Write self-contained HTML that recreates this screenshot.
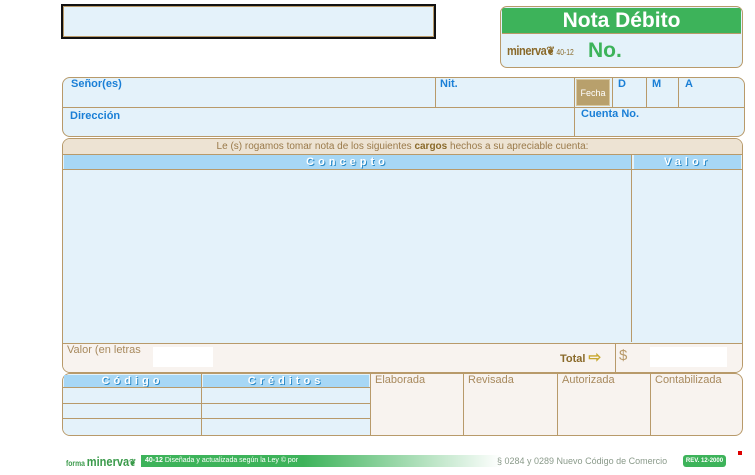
<!DOCTYPE html>
<html><head><meta charset="utf-8"><style>
*{margin:0;padding:0;box-sizing:border-box}
body{width:755px;height:475px;background:#fff;position:relative;overflow:hidden;font-family:"Liberation Sans",sans-serif}
.a{position:absolute}
.lb{color:#1a7fd6;font-weight:bold;font-size:11px}
.vl{position:absolute;width:1px;background:#b89a6a}
.hl{position:absolute;height:1px;background:#b89a6a}
.bar{position:absolute;background:#a7d7f5;color:#fff;font-weight:bold;font-size:11px;letter-spacing:4px;text-align:center;line-height:14px;text-shadow:1px 1px 0 #2a8ac8}
.sig{position:absolute;color:#a88a5e;font-size:11px}
</style></head><body>
<div class="a" style="left:61px;top:4px;width:375px;height:35px;border:2px solid #111;background:#e4f2fa;box-shadow:inset 0 0 0 1px #b89a6a"></div>

<div class="a" style="left:500px;top:6px;width:243px;height:62px;border:1.5px solid #b89a6a;border-radius:7px;background:#e4f2fa;overflow:hidden">
<div class="a" style="left:1px;top:1px;right:1px;height:26px;background:#3db35a;color:#fff;font-weight:bold;font-size:21px;text-align:center;line-height:26px;border-bottom:1.5px solid #b89a6a">Nota Débito</div>
<div class="a" style="left:6px;top:36px;color:#8a6a2a;font-weight:bold;font-size:13px;letter-spacing:-0.5px;transform:scaleX(0.85);transform-origin:left">minerva<span style="font-size:12px">❦</span><span style="font-size:8px;font-weight:normal;letter-spacing:0"> 40-12</span></div>
<div class="a" style="left:87px;top:32px;color:#3db35a;font-weight:bold;font-size:21px">No.</div>
</div>

<div class="a" style="left:62px;top:77px;width:683px;height:60px;border:1.5px solid #b89a6a;border-radius:8px;background:#e4f2fa"></div>
<div class="hl" style="left:63px;top:107px;width:681px"></div>
<div class="vl" style="left:435px;top:77px;height:30px"></div>
<div class="vl" style="left:574px;top:77px;height:60px"></div>
<div class="vl" style="left:612px;top:77px;height:30px"></div>
<div class="vl" style="left:646px;top:77px;height:30px"></div>
<div class="vl" style="left:678px;top:77px;height:30px"></div>
<div class="a" style="left:576px;top:79px;width:34px;height:27px;background:#b8a06c;border:1px solid #d8c8a0;color:#fff;font-size:9px;text-align:center;line-height:27px">Fecha</div>
<div class="a lb" style="left:71px;top:78px">Señor(es)</div>
<div class="a lb" style="left:440px;top:78px">Nit.</div>
<div class="a lb" style="left:618px;top:78px">D</div>
<div class="a lb" style="left:652px;top:78px">M</div>
<div class="a lb" style="left:685px;top:78px">A</div>
<div class="a lb" style="left:70px;top:110px">Dirección</div>
<div class="a lb" style="left:581px;top:108px">Cuenta No.</div>

<div class="a" style="left:62px;top:138px;width:681px;height:235px;border:1.5px solid #b89a6a;border-radius:8px;background:#e4f2fa;overflow:hidden">
<div class="a" style="left:0;top:0;right:0;height:16px;background:#ede3d3;border-bottom:1px solid #b89a6a;color:#9a7a4a;font-size:10px;text-align:center;line-height:15px">Le (s) rogamos tomar nota de los siguientes <b style="color:#8a6a2a">cargos</b> hechos a su apreciable cuenta:</div>
<div class="a" style="left:0;top:204px;right:0;bottom:0;background:#f8f3ef;border-top:1px solid #b89a6a"></div>
</div>
<div class="bar" style="left:64px;top:155px;width:567px">Concepto</div>
<div class="bar" style="left:634px;top:155px;width:107px">Valor</div>
<div class="hl" style="left:63px;top:169px;width:679px"></div>
<div class="vl" style="left:631px;top:154px;height:188px"></div>
<div class="vl" style="left:615px;top:343px;height:29px"></div>
<div class="sig" style="left:67px;top:344px">Valor (en letras</div>
<div class="a" style="left:153px;top:347px;width:60px;height:20px;background:#fff"></div>
<div class="a" style="left:650px;top:347px;width:77px;height:20px;background:#fff"></div>
<div class="a" style="left:560px;top:348px;color:#8a6a2a;font-weight:bold;font-size:11px">Total <span style="color:#c8a830;font-size:15px">⇨</span></div>
<div class="a" style="left:619px;top:347px;color:#b89a6a;font-size:15px">$</div>

<div class="a" style="left:62px;top:373px;width:681px;height:63px;border:1.5px solid #b89a6a;border-radius:8px;background:#f8f3ef;overflow:hidden">
<div class="a" style="left:0;top:0;width:308px;height:63px;background:#e4f2fa"></div>
</div>
<div class="bar" style="left:64px;top:375px;width:137px;height:12px;line-height:12px">Código</div>
<div class="bar" style="left:203px;top:375px;width:166px;height:12px;line-height:12px">Créditos</div>
<div class="hl" style="left:63px;top:387px;width:307px"></div>
<div class="hl" style="left:63px;top:403px;width:307px"></div>
<div class="hl" style="left:63px;top:418px;width:307px"></div>
<div class="vl" style="left:201px;top:374px;height:62px"></div>
<div class="vl" style="left:370px;top:374px;height:62px"></div>
<div class="vl" style="left:463px;top:374px;height:62px"></div>
<div class="vl" style="left:557px;top:374px;height:62px"></div>
<div class="vl" style="left:650px;top:374px;height:62px"></div>
<div class="sig" style="left:375px;top:374px">Elaborada</div>
<div class="sig" style="left:468px;top:374px">Revisada</div>
<div class="sig" style="left:562px;top:374px">Autorizada</div>
<div class="sig" style="left:655px;top:374px">Contabilizada</div>

<div class="a" style="left:66px;top:454px;color:#3a9a4a;font-size:8px;font-weight:bold;transform:scaleX(0.85);transform-origin:left">forma <span style="font-size:13px">minerva</span><span style="font-size:10px">❦</span></div>
<div class="a" style="left:141px;top:455px;width:360px;height:12px;background:linear-gradient(90deg,#3db35a 45%,#fff);color:#fff;font-size:7px;line-height:12px;padding-left:4px"><b>40-12</b> Diseñada y actualizada según la Ley © por</div>
<div class="a" style="left:497px;top:456px;color:#8a9a8a;font-size:9px">§ 0284 y 0289 Nuevo Código de Comercio</div>
<div class="a" style="left:683px;top:455px;width:43px;height:12px;background:#3db35a;border-radius:3px;color:#fff;font-size:6px;font-weight:bold;text-align:center;line-height:12px">REV. 12-2000</div>
<div class="a" style="left:738px;top:451px;width:4px;height:4px;background:#d00"></div>
</body></html>
